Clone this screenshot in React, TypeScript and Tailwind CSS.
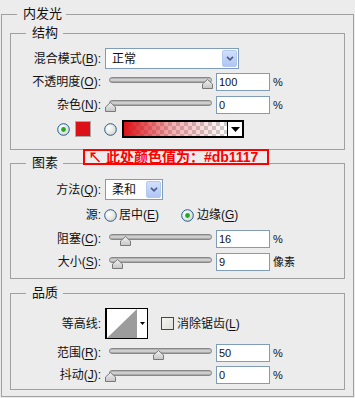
import React from "react";

const ui = "font-['Liberation_Sans','Noto_Sans_CJK_SC',sans-serif]";
const num = "font-['Liberation_Sans',sans-serif]";

function U({ children }: { children: React.ReactNode }) {
  return <span className="underline underline-offset-2">{children}</span>;
}

function Label({ children }: { children: React.ReactNode }) {
  return (
    <div className="w-[90px] shrink-0 text-right text-[12px] leading-[16px] whitespace-nowrap">
      {children}
    </div>
  );
}

function Radio({ checked }: { checked?: boolean }) {
  return (
    <svg width="13" height="13" viewBox="0 0 13 13" className="shrink-0">
      <defs>
        <radialGradient id="rfill" cx="35%" cy="35%" r="75%">
          <stop offset="0%" stopColor="#ffffff" />
          <stop offset="100%" stopColor="#d6d6ce" />
        </radialGradient>
      </defs>
      <circle cx="6.5" cy="6.5" r="5.8" fill="url(#rfill)" stroke="#1f5d8f" strokeWidth="1" />
      {checked && <circle cx="6.5" cy="6.5" r="2.4" fill="#24a824" />}
    </svg>
  );
}

function DropBtn() {
  return (
    <div className="w-[15px] h-[17px] shrink-0 rounded-[2px] border border-[#b4c8f4] bg-gradient-to-b from-[#d3e0fd] to-[#b0c5f3] flex items-center justify-center">
      <svg width="8" height="5" viewBox="0 0 8 5">
        <path d="M1 0.8 L4 3.8 L7 0.8" stroke="#4a5f86" strokeWidth="1.7" fill="none" />
      </svg>
    </div>
  );
}

function Slider({ thumb }: { thumb: number }) {
  return (
    <div className="relative w-[107px] h-[18px] shrink-0">
      <div className="absolute left-[4px] right-0 top-[4px] h-[6px] rounded-full border border-[#888888] bg-gradient-to-b from-[#a6a6a6] via-[#dedede] to-[#9a9a9a]" />
      <svg
        className="absolute top-[6px]"
        style={{ left: thumb }}
        width="11"
        height="10"
        viewBox="0 0 11 10"
      >
        <defs>
          <linearGradient id="tfill" x1="0" y1="0" x2="0" y2="1">
            <stop offset="0%" stopColor="#f2f2f2" />
            <stop offset="100%" stopColor="#c4c4c4" />
          </linearGradient>
        </defs>
        <path
          d="M0.5 9.5 L0.5 5 L5.5 0.5 L10.5 5 L10.5 9.5 Z"
          fill="url(#tfill)"
          stroke="#7a7a7a"
          strokeLinejoin="round"
        />
      </svg>
    </div>
  );
}

function NumBox({ value }: { value: string }) {
  return (
    <div
      className={`w-[54px] h-[18px] shrink-0 border border-[#7f9db9] bg-white pl-[2px] text-[11px] leading-[16px] ${num}`}
    >
      {value}
    </div>
  );
}

function SliderRow({
  label,
  thumb,
  value,
  unit,
  className,
}: {
  label: React.ReactNode;
  thumb: number;
  value: string;
  unit: string;
  className: string;
}) {
  return (
    <div className={`flex items-center gap-[4px] h-[18px] ${className}`}>
      <Label>{label}</Label>
      <Slider thumb={thumb} />
      <NumBox value={value} />
      <span className="ml-[-1px] text-[11px]">{unit}</span>
    </div>
  );
}

export default function App() {
  return (
    <div className={`relative w-[355px] h-[398px] bg-[#ececec] pt-[6px] pl-[1px] text-[#111] ${ui}`}>
      <fieldset className="w-[353px] border border-[#a0a0a0] px-[8px] pb-[6px]">
        <legend className="ml-[7px] pl-[6px] pr-[4px] text-[13px] leading-[16px]">内发光</legend>

        {/* 结构 */}
        <fieldset className="mt-[3px] border border-[#a0a0a0] pt-[7px] pb-[11px]">
          <legend className="ml-[15px] pl-[6px] pr-[5px] text-[13px] leading-[16px]">结构</legend>
          <div className="flex items-center gap-[4px] h-[21px]">
            <Label>
              混合模式(<U>B</U>):
            </Label>
            <div className="w-[134px] h-[21px] border border-[#7f9db9] bg-white flex items-center pl-[6px] pr-[1px]">
              <span className="flex-1 text-[12px]">正常</span>
              <DropBtn />
            </div>
          </div>
          <SliderRow
            className="mt-[4px]"
            label={<>不透明度(<U>O</U>):</>}
            thumb={97}
            value="100"
            unit="%"
          />
          <SliderRow
            className="mt-[5px]"
            label={<>杂色(<U>N</U>):</>}
            thumb={0}
            value="0"
            unit="%"
          />
          <div className="mt-[6px] h-[18px] flex items-center pl-[46px]">
            <Radio checked />
            <div className="ml-[5px] w-[16px] h-[16px] border border-[#a8a8a8] bg-[#db1117]" />
            <div className="ml-[13px]">
              <Radio />
            </div>
            <div className="ml-[5px] flex w-[122px] h-[18px] border-2 border-black">
              <div className="flex-1 bg-[image:linear-gradient(to_right,#db1117,rgba(219,17,23,0.35)_45%,rgba(219,17,23,0)),repeating-conic-gradient(#cfcfcf_0%_25%,#ffffff_0%_50%)] bg-[length:100%_100%,8px_8px]" />
              <div className="w-[15px] border-l border-black bg-white flex items-center justify-center">
                <svg width="9" height="5" viewBox="0 0 9 5">
                  <path d="M0 0 H9 L4.5 5 Z" fill="#000" />
                </svg>
              </div>
            </div>
          </div>
        </fieldset>

        {/* 图素 */}
        <fieldset className="mt-[5px] border border-[#a0a0a0] pt-[8px] pb-[7px]">
          <legend className="ml-[15px] pl-[6px] pr-[5px] text-[13px] leading-[16px]">图素</legend>
          <div className="flex items-center gap-[4px] h-[21px]">
            <Label>
              方法(<U>Q</U>):
            </Label>
            <div className="w-[58px] h-[21px] border border-[#7f9db9] bg-white flex items-center pl-[6px] pr-[1px]">
              <span className="flex-1 text-[12px]">柔和</span>
              <DropBtn />
            </div>
          </div>
          <div className="mt-[5px] h-[20px] flex items-center gap-[3px]">
            <Label>源:</Label>
            <div className="w-[74px] flex items-center gap-[2px]">
              <Radio />
              <span className="text-[12px]">
                居中(<U>E</U>)
              </span>
            </div>
            <div className="flex items-center gap-[3px]">
              <Radio checked />
              <span className="text-[12px]">
                边缘(<U>G</U>)
              </span>
            </div>
          </div>
          <SliderRow
            className="mt-[5px]"
            label={<>阻塞(<U>C</U>):</>}
            thumb={15}
            value="16"
            unit="%"
          />
          <SliderRow
            className="mt-[5px]"
            label={<>大小(<U>S</U>):</>}
            thumb={7}
            value="9"
            unit="像素"
          />
        </fieldset>

        {/* 品质 */}
        <fieldset className="mt-[6px] border border-[#a0a0a0] pt-[7px] pb-[5px]">
          <legend className="ml-[15px] pl-[6px] pr-[5px] text-[13px] leading-[16px]">品质</legend>
          <div className="flex items-center gap-[4px] h-[31px]">
            <Label>等高线:</Label>
            <div className="flex w-[43px] h-[31px] border border-black border-l-2 bg-white">
              <svg width="30" height="29" viewBox="0 0 30 29" className="shrink-0">
                <polygon points="0,29 30,0 30,29" fill="#9c9c9c" />
              </svg>
              <div className="flex-1 flex items-center justify-center">
                <svg width="5" height="3" viewBox="0 0 5 3">
                  <path d="M0 0 H5 L2.5 3 Z" fill="#000" />
                </svg>
              </div>
            </div>
            <div className="ml-[9px] w-[13px] h-[13px] border border-[#1f4f7f] bg-gradient-to-br from-[#f4f4f0] to-[#e0e0da]" />
            <span className="ml-[-1px] text-[12px]">
              消除锯齿(<U>L</U>)
            </span>
          </div>
          <SliderRow
            className="mt-[5px]"
            label={<>范围(<U>R</U>):</>}
            thumb={48}
            value="50"
            unit="%"
          />
          <SliderRow
            className="mt-[4px]"
            label={<>抖动(<U>J</U>):</>}
            thumb={0}
            value="0"
            unit="%"
          />
        </fieldset>
      </fieldset>

      {/* annotation */}
      <div className="absolute left-[83px] top-[149px] w-[186px] h-[16px] border-2 border-[#ff0000] bg-[#ececec] pl-[3px] flex items-center text-[#ff0000] text-[14px] font-bold leading-none whitespace-nowrap font-['Liberation_Sans','Noto_Sans_CJK_SC',sans-serif]">
        ↖ 此处颜色值为：#db1117
      </div>
    </div>
  );
}
